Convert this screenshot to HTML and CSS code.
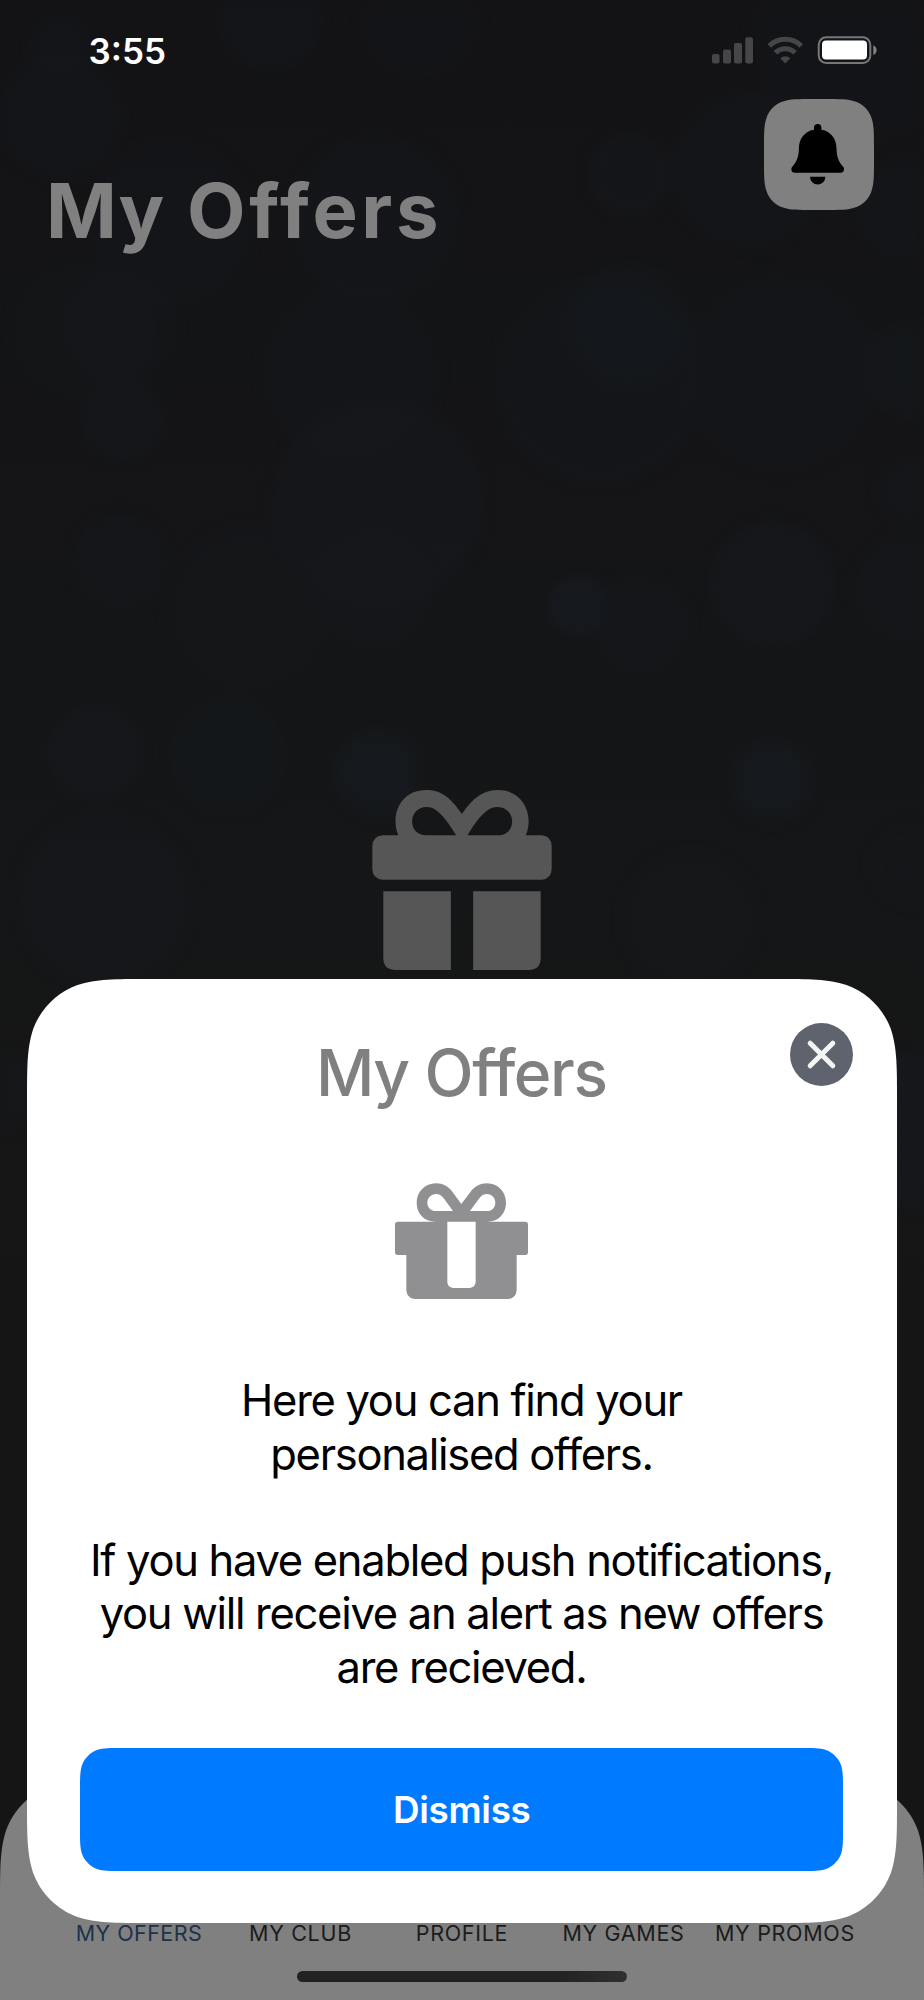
FILE: index.html
```html
<!DOCTYPE html>
<html lang="en">
<head>
<meta charset="utf-8">
<title>My Offers</title>
<link rel="stylesheet" href="styles.css">
</head>
<body>
<div class="screen">
  <svg class="bokeh" viewBox="0 0 924 2000" aria-hidden="true">
    <g fill="#171c24">
      <circle cx="270" cy="20" r="52" opacity=".4"/>
      <circle cx="60" cy="45" r="30" opacity=".4"/>
      <circle cx="60" cy="115" r="62" opacity=".35"/>
      <circle cx="170" cy="225" r="85" opacity=".3"/>
      <circle cx="375" cy="220" r="85" opacity=".4"/>
      <circle cx="420" cy="20" r="60" opacity=".25"/>
      <circle cx="630" cy="175" r="42" opacity=".5"/>
      <circle cx="750" cy="170" r="78" opacity=".35"/>
      <circle cx="905" cy="210" r="50" opacity=".4"/>
      <circle cx="860" cy="30" r="110" opacity=".25"/>
      <circle cx="120" cy="325" r="58" opacity=".4"/>
      <circle cx="80" cy="330" r="70" opacity=".25"/>
      <circle cx="122" cy="420" r="41" opacity=".5"/>
      <circle cx="350" cy="370" r="90" opacity=".3"/>
      <circle cx="630" cy="325" r="62" opacity=".45"/>
      <circle cx="600" cy="380" r="105" opacity=".35"/>
      <circle cx="780" cy="370" r="100" opacity=".3"/>
      <circle cx="910" cy="370" r="48" opacity=".45"/>
      <circle cx="910" cy="490" r="32" opacity=".4"/>
      <circle cx="378" cy="505" r="105" opacity=".5"/>
      <circle cx="375" cy="590" r="60" opacity=".4"/>
      <circle cx="250" cy="610" r="85" opacity=".3"/>
      <circle cx="120" cy="562" r="48" opacity=".4"/>
      <circle cx="578" cy="605" r="31" opacity=".9"/>
      <circle cx="640" cy="625" r="50" opacity=".4"/>
      <circle cx="772" cy="585" r="63" opacity=".6"/>
      <circle cx="910" cy="590" r="55" opacity=".4"/>
      <circle cx="95" cy="752" r="47" opacity=".65"/>
      <circle cx="228" cy="755" r="58" opacity=".45"/>
      <circle cx="378" cy="772" r="44" opacity=".7"/>
      <circle cx="772" cy="780" r="42" opacity=".7"/>
      <circle cx="105" cy="900" r="88" opacity=".4"/>
      <circle cx="105" cy="890" r="40" opacity=".3"/>
      <circle cx="690" cy="920" r="70" opacity=".2"/>
      <circle cx="910" cy="865" r="40" opacity=".3"/>
      <circle cx="0" cy="1090" r="40" opacity=".4"/>
      <circle cx="924" cy="1130" r="80" opacity=".6"/>
    </g>
  </svg>

  <header class="status">
    <span class="time">3:55</span>
    <svg class="indicators" viewBox="0 0 166 30" aria-hidden="true">
      <g fill="#464648">
        <rect x="0" y="18" width="7.5" height="9.5" rx="2"/>
        <rect x="11" y="13.500" width="8" height="14" rx="2"/>
        <rect x="22" y="7" width="8" height="20.500" rx="2"/>
        <rect x="33.300" y="1.300" width="7.700" height="26.200" rx="2"/>
      </g>
      <g fill="none" stroke="#464648" stroke-width="5">
        <path d="M57.300 9.900A22.500 22.500 0 0 1 89.300 9.900"/>
        <path d="M63.400 16.800A14 14 0 0 1 83.200 16.800"/>
      </g>
      <path d="M68.300 22.300Q73.300 18.300 78.300 22.300L73.300 27.400Z" fill="#464648"/>
      <rect x="106.700" y="1.300" width="51.600" height="25.600" rx="7.500" fill="none" stroke="#77777a" stroke-width="2"/>
      <rect x="110" y="4.600" width="45" height="19" rx="4" fill="#fff"/>
      <path d="M161.300 9.300Q164.600 11 164.600 14.200T161.300 19Z" fill="#838385"/>
    </svg>
  </header>

  <div class="heading">
    <h1 class="page-title"><span class="tight">My</span> Offers</h1>
    <svg class="bell" viewBox="0 0 110 111" role="img" aria-label="Notifications">
      <path fill="#808080" d="M0 50C0 34 0 26 2.500 19C5 11 11 5 19 2.500C26 0 34 0 50 0H60C76 0 84 0 91 2.500C99 5 105 11 107.500 19C110 26 110 34 110 50V61C110 77 110 85 107.500 92C105 100 99 106 91 108.500C84 111 76 111 60 111H50C34 111 26 111 19 108.500C11 106 5 100 2.500 92C0 85 0 77 0 61Z"/>
      <path fill="#000" transform="translate(.2 .3)" d="M49.800 30.500V28.500A3.700 3.700 0 0 1 57.200 28.500V30.500C67 32 72.200 40 72.300 49C72.400 60 76 64 79 67.500C80.500 69.500 80 73.500 76.500 73.500H30.500C27 73.500 26.500 69.500 28 67.500C31 64 34.600 60 34.700 49C34.800 40 40 32 49.800 30.500ZM45.800 77.500H61.200A7.700 7.700 0 0 1 45.800 77.500Z"/>
    </svg>
  </div>

  <main class="empty">
    <svg class="gift-large" viewBox="96 89 539 541" aria-hidden="true">
      <path fill="#565656" fill-rule="evenodd" d="M174 225C149 165 180 89 258 89C300 89 330 109 365 161C400 109 433 89 475 89C550 89 583 165 557 225H605Q635 228 635 258V326Q635 356 605 359H127Q96 356 96 326V258Q96 228 127 225ZM258 225H348C320 180 292 140 260 140C202 140 200 225 258 225ZM382 225H473C532 225 530 140 471 140C438 140 410 180 382 225ZM129 393H332V630H162Q129 627 129 597ZM399 393H602V597Q602 627 569 630H399Z"/>
    </svg>
  </main>

  <nav class="tabs">
    <svg class="tabs-shape" viewBox="0 0 924 220" aria-hidden="true">
      <path fill="#808080" d="M0 220V122.300C0 87.100 0 69.500 6 50.500C13.500 29.800 29.800 13.500 50.500 6C69.500 0 87.100 0 122.300 0H801.700C836.900 0 854.500 0 873.500 6C894.200 13.500 910.500 29.800 918 50.500C924 69.500 924 87.100 924 122.300V220Z"/>
    </svg>
    <span class="tab tab-active">MY OFFERS</span>
    <span class="tab">MY CLUB</span>
    <span class="tab">PROFILE</span>
    <span class="tab">MY GAMES</span>
    <span class="tab">MY PROMOS</span>
    <i class="home-bar"></i>
  </nav>

  <section class="sheet">
    <svg class="sheet-shape" viewBox="0 0 870 944" aria-hidden="true">
      <path fill="#fff" d="M0 122.300C0 87.100 0 69.500 6 50.500C13.500 29.800 29.800 13.500 50.500 6C69.500 0 87.100 0 122.300 0H747.700C782.900 0 800.500 0 819.500 6C840.200 13.500 856.500 29.800 864 50.500C870 69.500 870 87.100 870 122.300V821.700C870 856.900 870 874.500 864 893.500C856.500 914.200 840.200 930.500 819.500 938C800.500 944 782.900 944 747.700 944H122.300C87.100 944 69.500 944 50.500 938C29.800 930.500 13.500 914.200 6 893.500C0 874.500 0 856.900 0 821.700Z"/>
    </svg>
    <svg class="close" viewBox="0 0 63 63" role="img" aria-label="Close">
      <circle cx="31.500" cy="31.500" r="31.500" fill="#5f636e"/>
      <path d="M20.200 20.200L42.800 42.800M42.800 20.200L20.200 42.800" stroke="#f4f6f5" stroke-width="5" stroke-linecap="round"/>
    </svg>
    <h2 class="sheet-title">My Offers</h2>
    <svg class="gift-small" viewBox="315 489 399 348" aria-hidden="true">
      <path fill="#909092" fill-rule="evenodd" d="M438 605C400 605 380 578 380 548C380 516 405 490 438 490C458 490 476 500 487 515L514 552L542 515C553 500 571 490 591 490C624 490 648 516 648 548C648 578 628 605 591 605H705Q714 606 714 613V697Q714 705 706 705H680V811Q678 835 655 837H374Q351 835 349 811V705H324Q315 705 315 697V613Q315 605 324 605ZM438 573H489L460 533C453 525 446 522 438 522C424 522 412 534 412 548C412 562 423 573 438 573ZM540 573H591C606 573 616 562 616 548C616 534 605 522 591 522C583 522 576 525 569 533ZM472 605V787Q473 802 489 804H540Q555 802 557 787V605Z"/>
    </svg>
    <div class="copy">
      <p>Here you can find your<br>personalised offers.</p>
      <p>If you have enabled push notifications,<br>you will receive an alert as new offers<br>are recieved.</p>
    </div>
    <div class="dismiss">
      <svg class="dismiss-shape" viewBox="0 0 763 123" aria-hidden="true">
        <path fill="#007aff" d="M0 41.300C0 29.400 0 23.400 2 17C4.600 10.100 10.100 4.600 17 2C23.400 0 29.400 0 41.300 0H721.700C733.600 0 739.600 0 746 2C752.900 4.600 758.400 10.100 761 17C763 23.400 763 29.400 763 41.300V81.700C763 93.600 763 99.600 761 106C758.400 112.900 752.900 118.400 746 121C739.600 123 733.600 123 721.700 123H41.300C29.400 123 23.400 123 17 121C10.100 118.400 4.600 112.900 2 106C0 99.600 0 93.600 0 81.700Z"/>
      </svg>
      <span class="dismiss-label">Dismiss</span>
    </div>
  </section>
</div>
</body>
</html>
```

FILE: styles.css
```css
* { box-sizing: border-box; }
body { margin: 0; background: #151515; font-family: Inter, "Liberation Sans", sans-serif; }
h1, h2, p { margin: 0; }
svg { display: block; }

.screen {
  position: relative;
  width: 924px;
  height: 2000px;
  overflow: hidden;
  background: linear-gradient(#131315, #151617 900px, #151515);
  display: flex;
  flex-direction: column;
}
.bokeh { position: absolute; inset: 0; width: 924px; height: 2000px; filter: blur(6px); opacity: .65; }

.status, .heading, .empty, .tabs { position: relative; }

.status {
  display: flex;
  justify-content: space-between;
  align-items: flex-start;
  height: 99px;
  padding: 36px 46px 0 88.500px;
}
.time { font-size: 35px; line-height: 30px; font-weight: 600; color: #fff; }
.indicators { width: 166px; height: 30px; }

.heading {
  display: flex;
  justify-content: space-between;
  align-items: flex-start;
  height: 690px;
  padding: 0 50px 0 46px;
}
.page-title { margin-top: 65px; font-size: 76px; line-height: 92px; font-weight: 700; letter-spacing: 3.700px; color: #808080; }
.tight { letter-spacing: 1px; }
.bell { width: 110px; height: 111px; }

.empty { flex: 1; display: flex; justify-content: center; padding-right: 1px; }
.gift-large { width: 180px; height: 180px; margin-top: 1px; }

.tabs {
  display: grid;
  grid-template-columns: repeat(5, 161.500px);
  justify-content: center;
  align-content: start;
  height: 220px;
  padding-top: 141px;
}
.tabs-shape { position: absolute; inset: 0; width: 924px; height: 220px; }
.tab { position: relative; text-align: center; white-space: nowrap; font-size: 21.500px; line-height: 24px; letter-spacing: .7px; color: #1b1b1b; }
.tab-active { letter-spacing: .45px; color: #1b3249; }
.home-bar { position: relative; grid-column: 1 / -1; justify-self: center; width: 330px; height: 11px; margin-top: 26px; border-radius: 6px; background: linear-gradient(90deg, #222 80%, #303030); }

.sheet {
  position: absolute;
  left: 27px;
  top: 979.300px;
  width: 870px;
  height: 944px;
  display: flex;
  flex-direction: column;
  align-items: center;
}
.sheet-shape { position: absolute; inset: 0; width: 870px; height: 944px; }
.close { position: absolute; right: 44px; top: 44px; width: 63px; height: 63px; }
.sheet-title { position: relative; margin-top: 55px; padding-right: 1.500px; font-size: 64px; line-height: 78px; font-weight: 500; letter-spacing: -1.350px; color: #808080; }
.gift-small { position: relative; width: 133px; height: 116px; margin: 70.500px 1.500px 0 0; }
.copy { position: relative; margin-top: 75.500px; padding-right: 1px; text-align: center; white-space: nowrap; font-size: 43.500px; line-height: 53.300px; letter-spacing: -1.290px; color: #000; }
.copy p + p { margin-top: 53.300px; }
.dismiss { position: relative; width: 763px; height: 123px; margin: 54px .5px 0 0; display: flex; align-items: center; justify-content: center; }
.dismiss-shape { position: absolute; inset: 0; width: 763px; height: 123px; }
.dismiss-label { position: relative; font-size: 36.800px; line-height: 44px; font-weight: 600; letter-spacing: -.3px; color: #fff; }
```
